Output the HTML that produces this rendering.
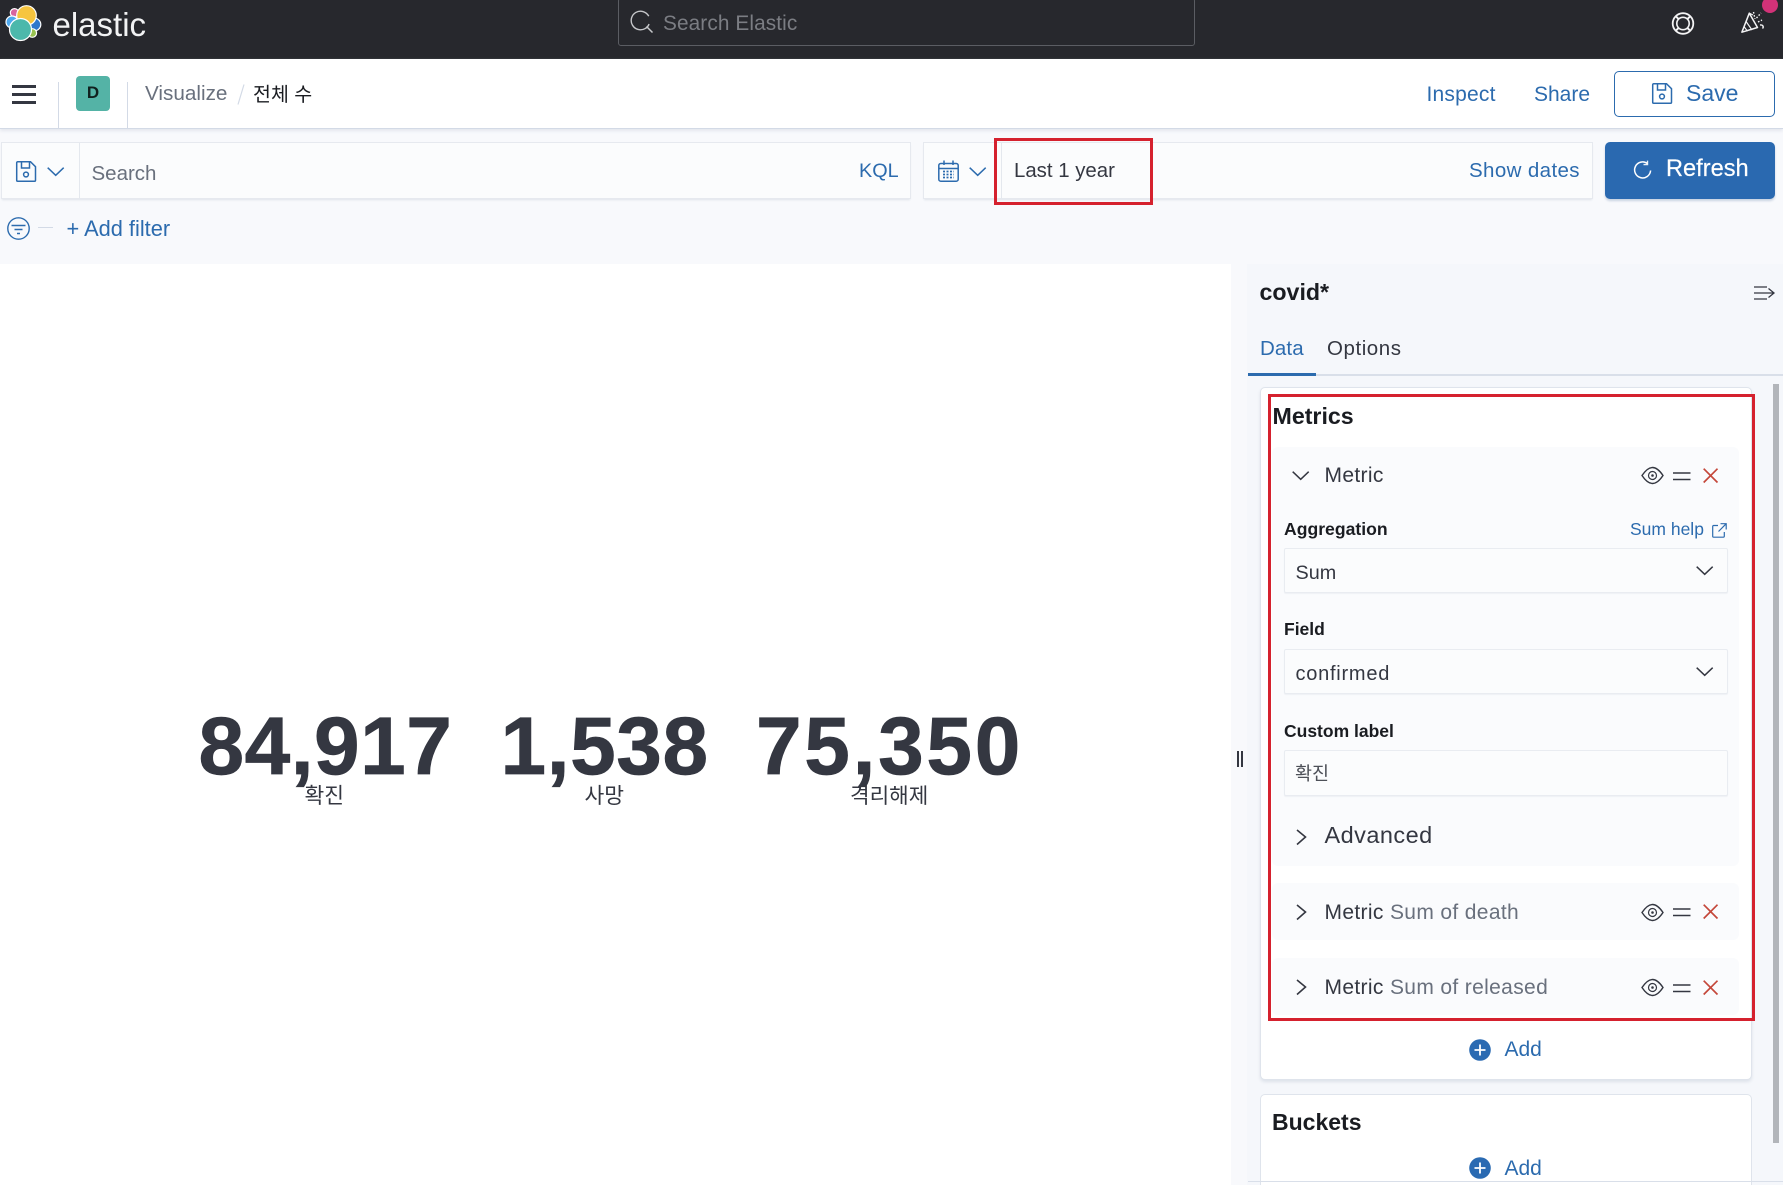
<!DOCTYPE html>
<html lang="ko"><head><meta charset="utf-8"><title>Visualize</title>
<style>
html,body{margin:0;padding:0;width:1783px;height:1185px;overflow:hidden;background:#f8f9fc}
body{position:relative;font-family:"Liberation Sans","Noto Sans CJK KR",sans-serif;color:#343741}
.b{position:absolute;box-sizing:border-box}
.t{position:absolute;white-space:nowrap;line-height:30px;height:30px}
.l{color:#2c6bae}
svg{position:absolute;overflow:visible;fill:none}
.box{background:#fbfcfd;border:1px solid #e6e9ef;box-shadow:0 2px 2px -1px #dfe3ea}
.inp{background:#fbfcfd;border:1px solid #e9ecf1;border-radius:2px;box-shadow:0 1px 1px #eef0f4}
.pn{background:#fafbfd;border-radius:6px}
.lb{font-weight:700;font-size:17.5px;color:#1a1c21}
.f{font-size:20px;letter-spacing:.4px;color:#343741}
.m{font-size:21px;letter-spacing:.35px;color:#343741}
.g{color:#69707d}
.n{height:96px;line-height:96px;font-size:82px;font-weight:700;color:#343741;-webkit-text-stroke:.7px #343741}
</style></head><body>
<svg width="0" height="0" style="position:absolute"><defs>
<g id="ev"><path d="M1 8.5C5 2.5 9 .5 11.5.5S18 2.5 22 8.5C18 14.5 14 16.5 11.5 16.5S5 14.5 1 8.5Z" stroke="#343741" stroke-width="1.4"/><circle cx="11.5" cy="8.5" r="4" stroke="#343741" stroke-width="1.2"/><circle cx="11.5" cy="8.5" r="1.3" fill="#343741"/></g>
<g id="eq"><path d="M0 1H17.5M0 7.5H17.5" stroke="#343741" stroke-width="1.6"/></g>
<g id="x"><path d="M.7.7L14.5 14.5M14.5.7L.7 14.5" stroke="#c4473a" stroke-width="1.7"/></g>
<g id="cd"><path d="M.7.7L8.7 8.3L16.7.7" stroke="#343741" stroke-width="1.5"/></g>
<g id="cr"><path d="M1 1L9.5 8L1 15.5" stroke="#343741" stroke-width="1.6"/></g>
<g id="sv"><path d="M1.7.7H14.5L19.5 5.7V19.2A1 1 0 0 1 18.5 20.2H1.7A1 1 0 0 1 .7 19.2V1.7A1 1 0 0 1 1.7.7Z" stroke-width="1.5"/><path d="M5.5.7V7H13.5V.7" stroke-width="1.5"/><circle cx="10" cy="13.5" r="2.4" stroke-width="1.5"/></g>
<g id="pl"><circle cx="11" cy="11" r="10.8" fill="#2a6ab2"/><path d="M11 5.5V16.5M5.5 11H16.5" stroke="#fff" stroke-width="1.8"/></g>
</defs></svg>

<!-- header -->
<div class="b" style="left:0;top:0;width:1783px;height:59px;background:#27282d"></div>
<svg style="left:0;top:0" width="50" height="50">
<g stroke="#fff" stroke-width="1.2">
<circle cx="14.5" cy="12.8" r="4.2" fill="#d9659f"/>
<circle cx="12" cy="22" r="6" fill="#4fa9ee"/>
<ellipse cx="34.5" cy="24.5" rx="6.3" ry="6.3" fill="#2e78cc"/>
<circle cx="32.3" cy="33" r="4.3" fill="#98c24f"/>
<circle cx="26.5" cy="15.5" r="9.8" fill="#f6c53f"/>
<circle cx="20.5" cy="29.5" r="11" fill="#4cb8ab"/>
</g></svg>
<div class="t" style="left:52.5px;top:10px;font-size:33px;color:#f2f3f4;line-height:30px;letter-spacing:0">elastic</div>
<div class="b" style="left:618px;top:-2px;width:577px;height:47.5px;border:1.5px solid #5b5d63;border-radius:3px;background:#27282d"></div>
<svg style="left:630px;top:10px" width="24" height="24"><circle cx="10.5" cy="10.5" r="9.3" stroke="#c6c7ca" stroke-width="1.4" stroke-dasharray="44 8" transform="rotate(60 10.5 10.5)"/><path d="M16.5 16.5L22.5 22.5" stroke="#c6c7ca" stroke-width="1.5"/></svg>
<div class="t" style="left:663px;top:9px;font-size:20.8px;letter-spacing:.1px;color:#7b7d83">Search Elastic</div>
<svg style="left:1671px;top:12px" width="24" height="24"><circle cx="12" cy="11.5" r="10.3" stroke="#f4f4f5" stroke-width="1.8"/><circle cx="12" cy="11.5" r="6.2" stroke="#f4f4f5" stroke-width="1.6"/><path d="M4.7 4.2L7.6 7.1M19.3 4.2L16.4 7.1M4.7 18.8L7.6 15.9M19.3 18.8L16.4 15.9" stroke="#f4f4f5" stroke-width="2"/></svg>
<svg style="left:1741px;top:11px" width="26" height="24"><path d="M.9 21.2L8.3 2.2L16.5 16.5Z" stroke="#f4f4f5" stroke-width="1.5" stroke-linejoin="round"/><path d="M5.3 10.8L11 19M3.2 15.8L6.5 20.2M8.3 2.2L12 4" stroke="#f4f4f5" stroke-width="1.2"/><path d="M12.5 1L14 8M15.5 7L20 2M17 11L21 9" stroke="#f4f4f5" stroke-width="1.4" stroke-dasharray="1.6 1.6"/><path d="M19 14C22 13.5 23 16 21.5 17.5" stroke="#f4f4f5" stroke-width="1.4"/></svg>
<div class="b" style="left:1762px;top:-3px;width:16px;height:16px;border-radius:50%;background:#d23278"></div>

<!-- nav bar -->
<div class="b" style="left:0;top:59px;width:1783px;height:70px;background:#fff;border-bottom:1px solid #d3dae6;box-shadow:0 2px 3px #e4e7ee"></div>
<div class="b" style="left:12px;top:85px;width:24px;height:2.6px;background:#343741"></div>
<div class="b" style="left:12px;top:93px;width:24px;height:2.6px;background:#343741"></div>
<div class="b" style="left:12px;top:101px;width:24px;height:2.6px;background:#343741"></div>
<div class="b" style="left:57.5px;top:82px;width:1px;height:46px;background:#d3dae6"></div>
<div class="b" style="left:126.5px;top:82px;width:1px;height:46px;background:#d3dae6"></div>
<div class="b" style="left:76px;top:76px;width:34px;height:35px;background:#54b3a6;border-radius:4px;text-align:center;line-height:34px;font-size:17px;font-weight:700;color:#10201e">D</div>
<div class="t" style="left:145px;top:79px;font-size:20.7px;color:#69707d">Visualize</div>
<svg style="left:237px;top:84px" width="8" height="21"><path d="M7 .5L1 20.5" stroke="#d3dae6" stroke-width="1.2"/></svg>
<div class="t" style="left:253px;top:79.5px;font-size:19.5px;color:#1a1c21">전체 수</div>
<div class="t l" style="left:1426.5px;top:79.5px;font-size:21px;letter-spacing:.2px">Inspect</div>
<div class="t l" style="left:1534px;top:79.5px;font-size:21px">Share</div>
<div class="b" style="left:1614px;top:71px;width:161px;height:46px;border:1.5px solid #2c6bae;border-radius:5px;background:#fff"></div>
<svg style="left:1652px;top:83px;stroke:#2c6bae" width="21" height="21"><use href="#sv"/></svg>
<div class="t l" style="left:1686px;top:78px;font-size:23px">Save</div>

<!-- query bar -->
<div class="b box" style="left:1px;top:142px;width:910px;height:57px"></div>
<div class="b" style="left:79px;top:143px;width:1px;height:56px;background:#e4e8ee"></div>
<svg style="left:16px;top:161px;stroke:#2c6bae" width="21" height="21"><use href="#sv"/></svg>
<svg style="left:47px;top:167px" width="18" height="9"><path d="M.7.7L8.7 8.3L16.7.7" stroke="#2c6bae" stroke-width="1.5"/></svg>
<div class="t" style="left:91.5px;top:159px;font-size:20.5px;color:#69707d">Search</div>
<div class="t l" style="left:859px;top:156px;font-size:19.8px">KQL</div>
<div class="b box" style="left:923px;top:142px;width:670px;height:57px"></div>
<svg style="left:938px;top:160px" width="21" height="22"><rect x=".8" y="3.5" width="19.4" height="17.7" rx="2" stroke="#2c6bae" stroke-width="1.5"/><path d="M.8 8.5H20.2M6 .5V5M15 .5V5" stroke="#2c6bae" stroke-width="1.5"/><path d="M5 11.5H16M5 14.5H16M5 17.5H16" stroke="#2c6bae" stroke-width="1.7" stroke-dasharray="2 1.5"/></svg>
<svg style="left:968.5px;top:167px" width="18" height="9"><path d="M.7.7L8.7 8.3L16.7.7" stroke="#2c6bae" stroke-width="1.5"/></svg>
<div class="b" style="left:1001px;top:143px;width:1px;height:56px;background:#e4e8ee"></div>
<div class="t" style="left:1014px;top:156px;font-size:20.4px;color:#343741">Last 1 year</div>
<div class="t l" style="left:1469px;top:156px;font-size:20.5px;letter-spacing:.38px">Show dates</div>
<div class="b" style="left:994px;top:138px;width:159px;height:67px;border:3px solid #d5212e"></div>
<div class="b" style="left:1605px;top:142px;width:170px;height:57px;background:#2a69b0;border-radius:5px;box-shadow:0 2px 2px #c9d3e2"></div>
<svg style="left:1634px;top:160px" width="18" height="19"><path d="M13.5 3.6A8 8 0 1 0 16.6 10.5" stroke="#fff" stroke-width="1.5"/><path d="M13.5 .6V4.6H9.5" stroke="#fff" stroke-width="1.4" opacity=".9"/></svg>
<div class="t" style="left:1666px;top:154px;font-size:23.6px;color:#fff;-webkit-text-stroke:.2px #fff">Refresh</div>

<!-- filter -->
<svg style="left:6.5px;top:216.5px" width="23" height="23"><circle cx="11.5" cy="11.5" r="10.7" stroke="#2c6bae" stroke-width="1.4"/><path d="M4.5 8.5H18.5M7.5 12.5H15.5M10 16.5H13" stroke="#2c6bae" stroke-width="1.5"/></svg>
<div class="b" style="left:38px;top:226.5px;width:15px;height:1.5px;background:#d3dae6"></div>
<div class="t l" style="left:66.5px;top:213.5px;font-size:21.8px">+ Add filter</div>

<!-- viz -->
<div class="b" style="left:0;top:264px;width:1231px;height:921px;background:#fff"></div>
<div class="t n" style="left:198.5px;top:699px;letter-spacing:.5px">84,917</div>
<div class="t n" style="left:500.5px;top:699px;letter-spacing:.6px">1,538</div>
<div class="t n" style="left:756px;top:699px;letter-spacing:2.7px">75,350</div>
<div class="t" style="left:304.5px;top:780.5px;font-size:21.5px">확진</div>
<div class="t" style="left:584.5px;top:780.5px;font-size:21.5px">사망</div>
<div class="t" style="left:850px;top:780.5px;font-size:21.3px">격리해제</div>
<div class="b" style="left:1237px;top:751px;width:2px;height:16px;background:#343741"></div>
<div class="b" style="left:1240.5px;top:751px;width:2px;height:16px;background:#343741"></div>

<!-- sidebar -->
<div class="b" style="left:1247px;top:264px;width:536px;height:921px;background:#f5f7fb"></div>
<div class="t" style="left:1259.5px;top:277px;font-size:23.2px;font-weight:700;color:#1a1c21">covid*</div>
<svg style="left:1753.5px;top:286px" width="21" height="15"><path d="M0 1H13M0 7H19M0 13H13M14.5 2.5L20 7L14.5 11.5" stroke="#343741" stroke-width="1.3"/></svg>
<div class="t l" style="left:1260px;top:334px;font-size:20.5px;letter-spacing:.1px">Data</div>
<div class="t" style="left:1327px;top:334px;font-size:20.5px;letter-spacing:.55px;color:#343741">Options</div>
<div class="b" style="left:1248px;top:374px;width:535px;height:1.5px;background:#d9dfe9"></div>
<div class="b" style="left:1248px;top:372.5px;width:68px;height:3px;background:#2c6bae"></div>

<div class="b" style="left:1260px;top:387px;width:492px;height:693px;background:#fff;border:1px solid #dfe4ec;border-radius:5px;box-shadow:0 2px 3px #dde2ea"></div>
<div class="b" style="left:1260px;top:1094px;width:492px;height:100px;background:#fff;border:1px solid #dfe4ec;border-radius:5px"></div>
<div class="b" style="left:1772.5px;top:384px;width:6px;height:759px;background:#b2b5ba"></div>
<div class="b" style="left:1248px;top:1181px;width:535px;height:1px;background:#d9dfe9"></div>

<div class="t" style="left:1272.5px;top:401px;font-size:23.2px;font-weight:700;color:#1a1c21">Metrics</div>
<div class="b pn" style="left:1272px;top:447px;width:467px;height:419px"></div>
<div class="b pn" style="left:1272px;top:883px;width:467px;height:57px"></div>
<div class="b pn" style="left:1272px;top:958px;width:467px;height:57px"></div>

<svg style="left:1291.5px;top:471px" width="18" height="10"><use href="#cd"/></svg>
<div class="t m" style="left:1324.5px;top:461px">Metric</div>
<svg style="left:1641px;top:467px" width="23" height="17"><use href="#ev"/></svg>
<svg style="left:1672.5px;top:472px" width="18" height="9"><use href="#eq"/></svg>
<svg style="left:1703px;top:468px" width="15" height="15"><use href="#x"/></svg>

<div class="t lb" style="left:1284px;top:514px;font-size:17.6px">Aggregation</div>
<div class="t l" style="left:1630px;top:514px;font-size:17.5px">Sum help</div>
<svg style="left:1712px;top:523px" width="15" height="15"><path d="M6 2.5H1.5A1 1 0 0 0 .7 3.5V13.5A.8.8 0 0 0 1.5 14.2H11.5A1 1 0 0 0 12.3 13.3V9M8.5.7H14.2V6.5M14.2.7L6.5 8.5" stroke="#2c6bae" stroke-width="1.2"/></svg>
<div class="b inp" style="left:1284px;top:548px;width:444px;height:45px"></div>
<div class="t" style="left:1295.5px;top:558px;font-size:19.8px">Sum</div>
<svg style="left:1696px;top:566px" width="18" height="10"><use href="#cd"/></svg>

<div class="t lb" style="left:1284px;top:614px">Field</div>
<div class="b inp" style="left:1284px;top:649px;width:444px;height:45px"></div>
<div class="t f" style="left:1295.5px;top:659px;letter-spacing:.75px">confirmed</div>
<svg style="left:1696px;top:667px" width="18" height="10"><use href="#cd"/></svg>

<div class="t lb" style="left:1284px;top:716px">Custom label</div>
<div class="b inp" style="left:1284px;top:750px;width:444px;height:46px"></div>
<div class="t" style="left:1295px;top:759px;font-size:18.5px;color:#4d5058">확진</div>

<svg style="left:1296px;top:829px" width="11" height="17"><use href="#cr"/></svg>
<div class="t" style="left:1324.5px;top:820px;font-size:23.5px;letter-spacing:.45px;color:#343741">Advanced</div>

<svg style="left:1296px;top:904px" width="11" height="17"><use href="#cr"/></svg>
<div class="t m" style="left:1324.5px;top:897.5px">Metric <span class="g">Sum of death</span></div>
<svg style="left:1641px;top:904px" width="23" height="17"><use href="#ev"/></svg>
<svg style="left:1672.5px;top:908px" width="18" height="9"><use href="#eq"/></svg>
<svg style="left:1703px;top:904px" width="15" height="15"><use href="#x"/></svg>

<svg style="left:1296px;top:979px" width="11" height="17"><use href="#cr"/></svg>
<div class="t m" style="left:1324.5px;top:972.5px">Metric <span class="g">Sum of released</span></div>
<svg style="left:1641px;top:979px" width="23" height="17"><use href="#ev"/></svg>
<svg style="left:1672.5px;top:984px" width="18" height="9"><use href="#eq"/></svg>
<svg style="left:1703px;top:980px" width="15" height="15"><use href="#x"/></svg>

<div class="b" style="left:1268px;top:394px;width:487px;height:627px;border:3.5px solid #d5212e"></div>

<svg style="left:1469px;top:1039px" width="22" height="22"><use href="#pl"/></svg>
<div class="t l" style="left:1504.5px;top:1035px;font-size:21px">Add</div>

<div class="t" style="left:1272px;top:1107px;font-size:23px;font-weight:700;color:#1a1c21">Buckets</div>
<svg style="left:1469px;top:1157px" width="22" height="22"><use href="#pl"/></svg>
<div class="t l" style="left:1504.5px;top:1154px;font-size:21px">Add</div>
</body></html>
